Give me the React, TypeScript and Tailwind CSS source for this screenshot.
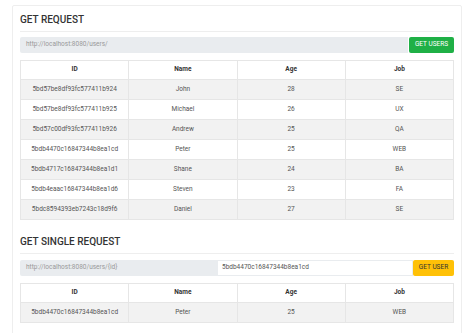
import React from "react";

type User = { id: string; name: string; age: number; job: string };

const users: User[] = [
  { id: "5bd57be8df93fc577411b924", name: "John", age: 28, job: "SE" },
  { id: "5bd57be8df93fc577411b925", name: "Michael", age: 26, job: "UX" },
  { id: "5bd57c00df93fc577411b926", name: "Andrew", age: 25, job: "QA" },
  { id: "5bdb4470c16847344b8ea1cd", name: "Peter", age: 25, job: "WEB" },
  { id: "5bdb4717c16847344b8ea1d1", name: "Shane", age: 24, job: "BA" },
  { id: "5bdb4eaac16847344b8ea1d6", name: "Steven", age: 23, job: "FA" },
  { id: "5bdc8594393eb7243c18d9f6", name: "Daniel", age: 27, job: "SE" },
];

const UserTable = ({ rows }: { rows: User[] }) => (
  <table className="w-full mt-[7px] border-collapse table-fixed text-[6.5px] text-center">
    <thead>
      <tr className="h-[19px] bg-white">
        {["ID", "Name", "Age", "Job"].map((h) => (
          <th key={h} className="border border-[#e6e6e6] font-bold text-[#333] p-0">
            {h}
          </th>
        ))}
      </tr>
    </thead>
    <tbody>
      {rows.map((u, i) => (
        <tr key={u.id} className={`h-[20px] ${i % 2 === 0 ? "bg-[#f2f2f2]" : "bg-white"}`}>
          <td className="border border-[#e6e6e6] text-[#555] p-0">{u.id}</td>
          <td className="border border-[#e6e6e6] text-[#555] p-0">{u.name}</td>
          <td className="border border-[#e6e6e6] text-[#555] p-0">{u.age}</td>
          <td className="border border-[#e6e6e6] text-[#555] p-0">{u.job}</td>
        </tr>
      ))}
    </tbody>
  </table>
);

const Title = ({ children, className = "" }: { children: React.ReactNode; className?: string }) => (
  <h2
    className={`h-[19px] text-[10px] leading-[14px] font-medium text-[#333] pb-[5px] border-b border-[#eee] box-border ${className}`}
  >
    {children}
  </h2>
);

export default function App() {
  return (
    <div
      className="bg-white min-h-screen pt-[5px] px-[12px]"
      style={{ fontFamily: "Roboto, 'Liberation Sans', sans-serif" }}
    >
      <div className="border border-[#eee] rounded-[2px] px-[7px] pt-[7px] pb-[12px]">
        {/* GET all users */}
        <Title>GET REQUEST</Title>
        <div className="flex mt-[5px] h-[16px] gap-px">
          <div className="flex-1 bg-[#e9ecef] rounded-l-[2px] flex items-center pl-[6px] text-[6.5px] text-[#999]">
            http://localhost:8080/users/
          </div>
          <button className="w-[45px] bg-[#1fb046] rounded-[2px] text-white text-[6.5px] flex items-center justify-center">
            GET USERS
          </button>
        </div>
        <UserTable rows={users} />

        {/* GET single user */}
        <Title className="mt-[15px]">GET SINGLE REQUEST</Title>
        <div className="flex mt-[6px] h-[16px]">
          <div className="w-[197px] bg-[#e9ecef] rounded-l-[2px] flex items-center pl-[6px] text-[6.5px] text-[#999]">
            http://localhost:8080/users/{"{id}"}
          </div>
          <div className="flex-1 border border-[#e9ecef] bg-white flex items-center pl-[4px] text-[6.5px] text-[#555]">
            5bdb4470c16847344b8ea1cd
          </div>
          <button className="w-[41px] bg-[#ffc107] rounded-[2px] text-[#333] text-[6.5px] flex items-center justify-center">
            GET USER
          </button>
        </div>
        <UserTable rows={[users[3]]} />
      </div>
    </div>
  );
}
